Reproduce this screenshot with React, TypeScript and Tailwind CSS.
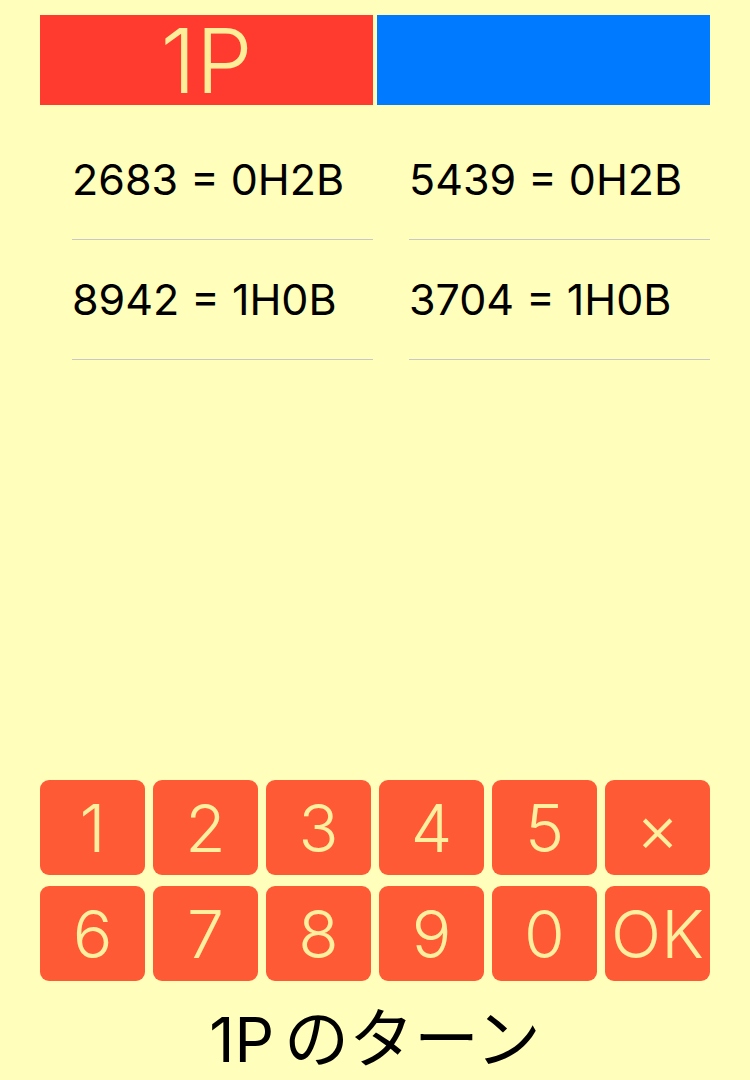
const history: [string, string][] = [
  ['2683 = 0H2B', '5439 = 0H2B'],
  ['8942 = 1H0B', '3704 = 1H0B'],
];

const keys = ['1', '2', '3', '4', '5', '×', '6', '7', '8', '9', '0', 'OK'];

export default function App() {
  return (
    <div
      className="flex h-[1080px] w-[750px] flex-col bg-[#ffffbb] px-[40px] pt-[15px]"
      style={{ fontFamily: 'Inter, "Noto Sans CJK JP", sans-serif' }}
    >
      {/* players */}
      <div className="flex h-[90px] gap-[4px]">
        <div className="flex flex-1 items-center justify-center bg-[#ff3b30] pt-[2px] text-[90px] font-light leading-none text-[#ffee99]">
          1P
        </div>
        <div className="flex-1 bg-[#007aff]" />
      </div>

      {/* guesses */}
      <div className="mt-[15px] flex flex-1 flex-col">
        {history.map((row, i) => (
          <div key={i} className="flex gap-[4px]">
            {row.map((text, j) => (
              <div key={j} className="flex-1 pl-[32px]">
                <div className="flex h-[120px] items-center border-b border-[#c8c8c8] text-[43px] leading-none text-black">
                  {text}
                </div>
              </div>
            ))}
          </div>
        ))}
      </div>

      {/* keypad */}
      <div className="grid grid-cols-6 gap-x-[8px] gap-y-[11px]">
        {keys.map((k) => (
          <button
            key={k}
            type="button"
            className="flex h-[95px] items-center justify-center rounded-[9px] bg-[#ff5a36] text-[66px] font-light leading-none text-[#fff0a0]"
          >
            {k}
          </button>
        ))}
      </div>

      <div className="flex h-[99px] items-baseline justify-center pt-[21px] leading-none text-black">
        <span className="text-[62px]">1P</span>
        <span
          className="ml-[10px] text-[65px]"
          style={{ fontFamily: '"Noto Sans CJK JP", sans-serif' }}
        >
          のターン
        </span>
      </div>
    </div>
  );
}
